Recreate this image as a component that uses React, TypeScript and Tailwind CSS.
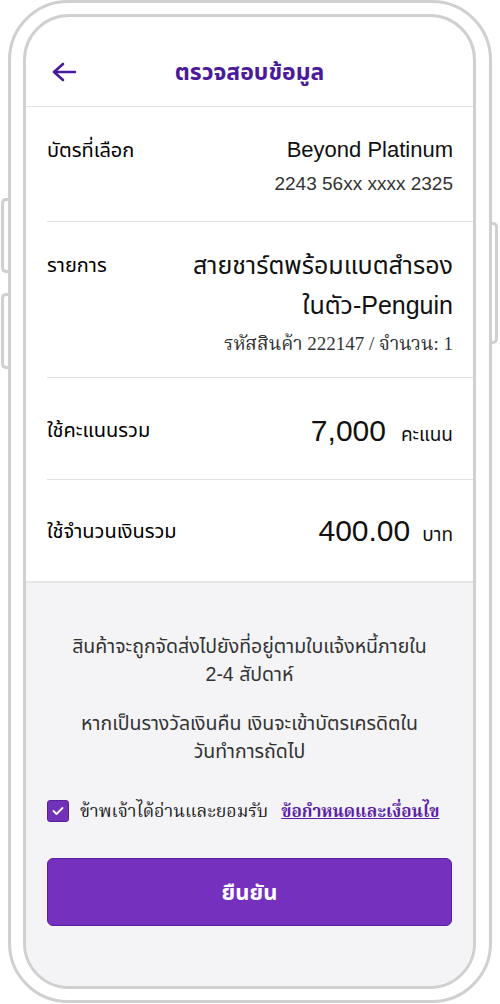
import React from "react";

const sans = "font-['Liberation_Sans','Noto_Sans_Thai','Noto_Sans',sans-serif]";

function BackArrow() {
  return (
    <svg width="26" height="20" viewBox="0 0 26 20" fill="none">
      <path
        d="M24 10H3M12 2L3 10L12 18"
        stroke="#4b1a9a"
        strokeWidth="2.6"
        strokeLinecap="round"
        strokeLinejoin="round"
      />
    </svg>
  );
}

function App() {
  return (
    <div className={`relative w-[500px] h-[1004px] bg-white ${sans}`}>
      {/* side buttons of the phone */}
      <div className="absolute left-[1px] top-[198px] w-[14px] h-[75px] border-[3px] border-r-0 border-[#d0d0d0] rounded-l-[5px]" />
      <div className="absolute left-[1px] top-[293px] w-[14px] h-[76px] border-[3px] border-r-0 border-[#d0d0d0] rounded-l-[5px]" />
      <div className="absolute right-[2px] top-[222px] w-[14px] h-[122px] border-[3px] border-l-0 border-[#d0d0d0] rounded-r-[5px]" />

      <div className="relative ml-[8px] w-[484px] h-[1003px] border-[3px] border-[#d0d0d0] rounded-[60px] bg-white pl-[12px] pr-[13px] pt-[11px] pb-[11px]">
        <div className="h-full border-[3px] border-[#d0d0d0] rounded-[46px] overflow-hidden flex flex-col bg-white">
          {/* header */}
          <div className="h-[90px] shrink-0 border-b border-[#e2e2e2] pt-[20px] grid grid-cols-[1fr_auto_1fr] items-center">
            <div className="pl-[25px] flex items-center">
              <BackArrow />
            </div>
            <h1 className="text-[23px] font-bold text-[#4b1a9a] leading-[30px]">
              ตรวจสอบข้อมูล
            </h1>
            <div />
          </div>

          {/* detail rows */}
          <div className="ml-[21px] text-[#111]">
            <div className="flex justify-between border-b border-[#e2e2e2] pr-[20px] pt-[28px] pb-[22px]">
              <div className="text-[20px] leading-[30px] text-black">บัตรที่เลือก</div>
              <div className="text-right">
                <div className="text-[22px] leading-[30px]">Beyond Platinum</div>
                <div className="text-[19px] leading-[30px] mt-[4px] text-[#333]">
                  2243 56xx xxxx 2325
                </div>
              </div>
            </div>

            <div className="flex justify-between border-b border-[#e2e2e2] pr-[20px] pt-[23px] pb-[21px]">
              <div className="text-[20px] leading-[40px] shrink-0 text-black">รายการ</div>
              <div className="text-right">
                <div className="text-[25px] leading-[40px]">
                  สายชาร์ตพร้อมแบตสำรอง
                  <br />
                  ในตัว-Penguin
                </div>
                <div className="font-['Liberation_Serif','Noto_Serif_Thai',serif] text-[19px] leading-[24px] mt-[7px] text-[#333]">
                  รหัสสินค้า 222147 / จำนวน: 1
                </div>
              </div>
            </div>

            <div className="flex justify-between items-center border-b border-[#e2e2e2] pr-[20px] h-[102px] pt-[3px]">
              <div className="text-[20px] text-black">ใช้คะแนนรวม</div>
              <div className="flex items-baseline gap-[15px]">
                <span className="text-[30px]">7,000</span>
                <span className="text-[19px]">คะแนน</span>
              </div>
            </div>

            <div className="flex justify-between items-center pr-[20px] h-[101px]">
              <div className="text-[20px] text-black">ใช้จำนวนเงินรวม</div>
              <div className="flex items-baseline gap-[12px]">
                <span className="text-[30px]">400.00</span>
                <span className="text-[19px]">บาท</span>
              </div>
            </div>
          </div>

          {/* notes + confirm */}
          <div className="flex-1 border-t-2 border-[#e6e6e8] bg-[#f4f3f6] px-[21px] pt-[49px]">
            <p className="text-center text-[19.5px] leading-[28px] text-[#333]">
              สินค้าจะถูกจัดส่งไปยังที่อยู่ตามใบแจ้งหนี้ภายใน
              <br />
              2-4 สัปดาห์
            </p>
            <p className="text-center text-[19.5px] leading-[28px] text-[#333] mt-[21px]">
              หากเป็นรางวัลเงินคืน เงินจะเข้าบัตรเครดิตใน
              <br />
              วันทำการถัดไป
            </p>

            <label className="mt-[34px] flex items-center gap-[11px] h-[24px]">
              <span className="w-[22px] h-[22px] rounded-[3px] bg-[#7232b8] border border-[#5a1ea3] flex items-center justify-center shrink-0">
                <svg width="12" height="10" viewBox="0 0 12 10" fill="none">
                  <path
                    d="M1.5 5L4.5 8L10.5 2"
                    stroke="white"
                    strokeWidth="1.8"
                    strokeLinecap="round"
                    strokeLinejoin="round"
                  />
                </svg>
              </span>
              <span className="font-['Liberation_Serif','Noto_Serif_Thai',serif] text-[17.8px] text-[#222] whitespace-nowrap">
                ข้าพเจ้าได้อ่านและยอมรับ
                <a className="ml-[13px] font-bold text-[#5b1fa8] underline text-[17px]">
                  ข้อกำหนดและเงื่อนไข
                </a>
              </span>
            </label>

            <button
              type="button"
              className="mt-[35px] w-full h-[68px] rounded-[6px] bg-[#7530be] border border-[#5a1ea3] text-white text-[22px] font-bold"
            >
              ยืนยัน
            </button>
          </div>
        </div>
      </div>
    </div>
  );
}

export default App;
